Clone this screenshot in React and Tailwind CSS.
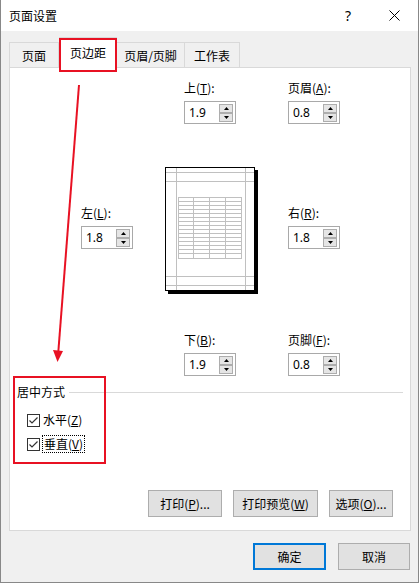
// Page Setup dialog - margins tab
const cjk = "font-['Noto_Sans_CJK_SC','Noto_Sans',sans-serif]";

const SpinBtn = ({ up }) => (
  <div className="w-[14px] h-[9px] border border-[#adadad] bg-[#e5e5e5] flex items-center justify-center">
    <svg width="5" height="3" viewBox="0 0 5 3">
      {up ? <polygon points="2.5,0 5,3 0,3" fill="#000" /> : <polygon points="0,0 5,0 2.5,3" fill="#000" />}
    </svg>
  </div>
);

const Spinner = ({ label, mn, value }) => (
  <div className="flex flex-col">
    <div className="h-4 leading-4">
      {label}(<span className="underline">{mn}</span>):
    </div>
    <div className="mt-[5px] w-[52px] h-[23px] border border-[#a9a9a9] bg-white flex items-center">
      <span className="pl-[4px] flex-1 font-['Noto_Sans',sans-serif] text-[12px] leading-4">{value}</span>
      <div className="flex flex-col mr-[2px]">
        <SpinBtn up />
        <SpinBtn />
      </div>
    </div>
  </div>
);

const PagePreview = () => {
  const rows = [];
  for (let i = 1; i < 15; i++) rows.push(30.5 + i * 4);
  const cols = [28.5, 44.5, 60.5];
  return (
    <svg width="94" height="128" viewBox="0 0 94 128">
      <rect x="3" y="3" width="90" height="124" fill="#000" />
      <rect x="0.5" y="0.5" width="89" height="123" fill="#fff" stroke="#000" />
      <g stroke="#c0c0c0" strokeWidth="1">
        <line x1="11.5" y1="1" x2="11.5" y2="123" />
        <line x1="80.5" y1="1" x2="80.5" y2="123" />
        <line x1="1" y1="5.5" x2="89" y2="5.5" />
        <line x1="1" y1="14.5" x2="89" y2="14.5" />
        <line x1="1" y1="109.5" x2="89" y2="109.5" />
        <line x1="1" y1="118.5" x2="89" y2="118.5" />
        <rect x="13.5" y="30.5" width="63" height="61" fill="none" />
        {rows.map((y) => (
          <line key={y} x1="13.5" y1={y} x2="76.5" y2={y} />
        ))}
        {cols.map((x) => (
          <line key={x} x1={x} y1="30.5" x2={x} y2="91.5" />
        ))}
      </g>
    </svg>
  );
};

const Check = () => (
  <div className="w-[13px] h-[13px] border border-[#333] bg-white flex items-center justify-center">
    <svg width="11" height="11" viewBox="0 0 11 11">
      <polyline points="1.5,5.5 4,8 9.5,2.5" fill="none" stroke="#333" strokeWidth="1.2" />
    </svg>
  </div>
);

const Btn = ({ children, w, primary }) => (
  <div
    className={`h-[27px] flex items-center justify-center bg-[#e1e1e1] ${w} ${
      primary ? 'border-2 border-[#0078d7]' : 'border border-[#adadad]'
    }`}
  >
    {children}
  </div>
);

export default function App() {
  return (
    <div className={`relative w-[419px] h-[583px] overflow-hidden bg-[#f0f0f0] border-l border-r border-b border-[#888] text-[12px] text-black ${cjk}`}>
      {/* title bar */}
      <div className="h-[31px] bg-white flex items-center pl-[8px]">
        <span className="text-[12px] leading-4">页面设置</span>
        <span className="ml-auto font-['Noto_Sans',sans-serif] text-[14px] mr-[38px]">?</span>
        <svg width="11" height="11" viewBox="0 0 11 11" className="mr-[18px]">
          <path d="M0.5 0.5 L10.5 10.5 M10.5 0.5 L0.5 10.5" stroke="#000" strokeWidth="1" />
        </svg>
      </div>

      {/* tabs */}
      <div className="h-[36px] flex items-end pl-[8px] relative z-10">
        <div className="w-[50px] h-[25px] border border-b-0 border-[#d9d9d9] flex items-center justify-center leading-4 pt-[2px]">页面</div>
        <div className="w-[58px] bg-white border border-b-0 border-[#d9d9d9] flex items-center justify-center leading-4 mb-[-1px] h-[31px]">页边距</div>
        <div className="w-[68px] h-[25px] border border-b-0 border-l-0 border-[#d9d9d9] flex items-center justify-center leading-4 pt-[2px]">页眉/页脚</div>
        <div className="w-[55px] h-[25px] border border-b-0 border-l-0 border-[#d9d9d9] flex items-center justify-center leading-4 pt-[2px]">工作表</div>
      </div>

      {/* tab panel */}
      <div className="ml-[8px] w-[402px] h-[464px] bg-white border border-[#d9d9d9] flex flex-col">
        <div className="mt-[12px] pl-[174px] flex">
          <div className="w-[104px]">
            <Spinner label="上" mn="T" value="1.9" />
          </div>
          <Spinner label="页眉" mn="A" value="0.8" />
        </div>

        <div className="flex pl-[71px]">
          <div className="w-[84px] mt-[81px]">
            <Spinner label="左" mn="L" value="1.8" />
          </div>
          <div className="w-[123px] mt-[43px]">
            <PagePreview />
          </div>
          <div className="mt-[81px]">
            <Spinner label="右" mn="R" value="1.8" />
          </div>
        </div>

        <div className="mt-[37px] pl-[174px] flex">
          <div className="w-[104px]">
            <Spinner label="下" mn="B" value="1.9" />
          </div>
          <Spinner label="页脚" mn="F" value="0.8" />
        </div>

        <div className="mt-[8px] flex items-center pl-[7px] pr-[7px]">
          <span className="leading-4">居中方式</span>
          <div className="ml-[4px] flex-1 border-t border-[#d9d9d9]" />
        </div>

        <div className="mt-[12px] pl-[17px] flex items-center gap-[3px] h-[16px]">
          <Check />
          <span className="leading-4">
            水平(<span className="underline">Z</span>)
          </span>
        </div>
        <div className="mt-[7px] pl-[17px] flex items-center gap-[2px] h-[18px]">
          <Check />
          <span className="leading-4 border border-dotted border-black px-[1px]">
            垂直(<span className="underline">V</span>)
          </span>
        </div>

        <div className="mt-auto mb-[13px] pr-[17px] flex justify-end gap-[11px]">
          <Btn w="w-[74px]">
            打印(<span className="underline">P</span>)...
          </Btn>
          <Btn w="w-[85px]">
            打印预览(<span className="underline">W</span>)
          </Btn>
          <Btn w="w-[64px]">
            选项(<span className="underline">O</span>)...
          </Btn>
        </div>
      </div>

      {/* dialog buttons */}
      <div className="mt-[12px] pr-[8px] flex justify-end gap-[12px]">
        <Btn w="w-[73px]" primary>
          确定
        </Btn>
        <Btn w="w-[72px]">取消</Btn>
      </div>

      {/* red annotations */}
      <div className="absolute left-[58px] top-[38px] w-[58px] h-[34px] border-2 border-[#e81123] z-20" />
      <div className="absolute left-[12px] top-[376px] w-[93px] h-[88px] border-2 border-[#e81123] z-20" />
      <svg className="absolute left-0 top-0 z-20" width="419" height="583" viewBox="0 0 419 583">
        <line x1="78" y1="85" x2="57.3" y2="352" stroke="#e81123" strokeWidth="2" />
        <polygon points="52,350 62,351 56.5,362" fill="#e81123" />
      </svg>
    </div>
  );
}
